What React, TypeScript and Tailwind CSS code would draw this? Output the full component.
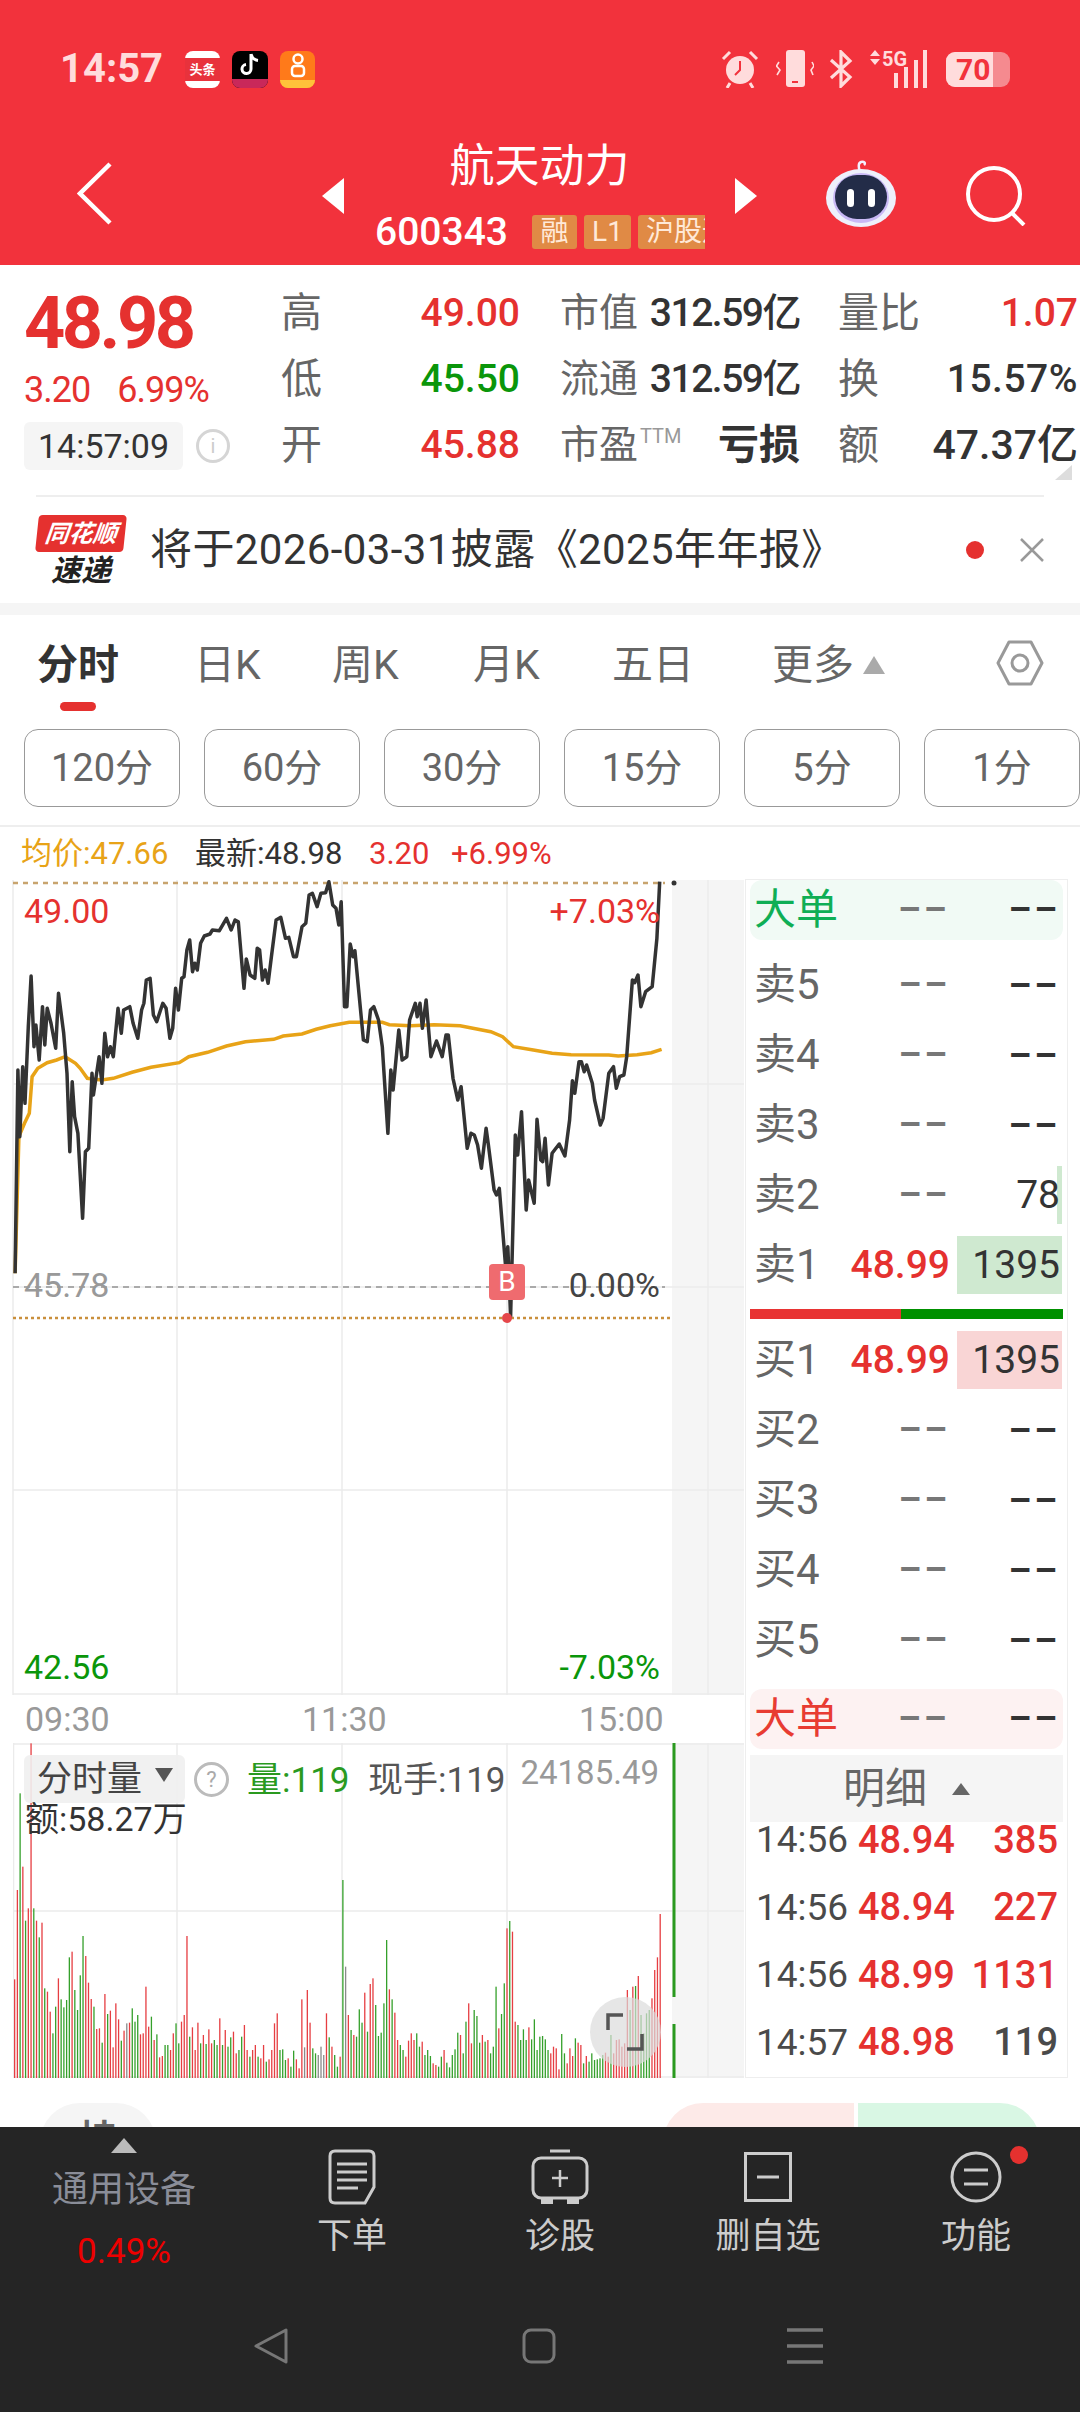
import type { ReactNode } from "react";

// traced from the chart, zoom coordinates: x / 2.119, y / 3
const pricePts = "32,1240 38,630 42,830 48,620 53,730 60,500 66,348 72,560 76,495 83,600 90,440 95,555 100,445 108,490 118,565 124,400 135,520 142,640 148,875 153,665 158,770 165,820 175,1075 181,875 188,865 195,640 198,705 210,590 216,670 222,520 228,590 234,560 240,590 250,445 257,520 262,450 275,440 282,490 292,535 300,450 305,430 310,360 318,355 325,465 332,485 345,430 352,445 360,535 366,505 372,385 378,450 385,355 390,350 396,270 402,240 408,335 413,310 418,330 425,250 433,228 445,222 450,210 465,212 480,175 490,210 498,180 505,185 517,385 522,297 530,345 540,355 545,265 550,270 556,360 562,330 568,370 575,290 585,180 595,172 605,235 612,232 622,290 628,290 640,200 648,190 655,105 662,100 672,140 680,100 690,98 697,65 705,135 712,145 718,195 723,125 730,440 735,440 742,252 748,290 752,272 770,540 778,545 785,450 792,440 802,480 810,560 822,820 828,630 833,690 845,510 852,600 862,590 868,480 880,430 884,470 890,430 895,505 903,420 913,590 925,543 937,590 945,525 950,525 960,655 970,720 977,680 990,865 998,820 1005,825 1012,855 1020,925 1030,805 1035,855 1047,990 1052,1005 1058,985 1072,1230 1076,1160 1082,1370 1092,825 1097,885 1105,755 1115,1050 1120,960 1132,1030 1138,778 1146,900 1150,905 1155,835 1162,975 1170,880 1185,852 1197,888 1207,780 1213,662 1218,700 1227,605 1232,605 1238,635 1243,615 1255,670 1260,720 1272,795 1278,775 1290,640 1300,620 1306,685 1313,650 1322,645 1328,590 1340,360 1345,368 1352,345 1358,440 1368,395 1382,380 1392,235 1398,65";
const avgPts = "32,1240 40,830 52,790 62,760 68,650 80,625 100,608 120,600 138,590 160,610 170,625 185,655 215,660 240,655 280,637 320,622 380,608 400,590 440,577 480,558 520,545 580,538 600,528 640,522 670,508 700,497 740,487 810,487 825,494 870,497 920,494 975,497 1040,515 1065,530 1088,560 1130,570 1170,580 1210,584 1290,585 1310,588 1350,584 1380,578 1402,568";
const volData = "838r 570r 280g 500r 662g 625r 130r 625g 662r 712g 668r 865g 875r 935r 1000g 920g 835r 898g 922g 900g 772g 755r 870g 930g 826g 708g 768r 848r 897r 920g 987r 985r 1028g 882r 942g 932r 1042r 910r 958r 1022g 992r 970x 968r 925g 965g 945g 1003r 1000r 860r 980r 950g 1020r 1003g 1072r 1068r 1035g 1035g 1050r 1000r 970g 1030g 965r 945r 708r 1010g 982r 1050r 968r 1030g 1005r 1032g 988r 1030r 1020g 1035g 955r 1035g 990r 1040g 1012g 995r 1060r 1050g 1010g 975r 1050r 1070g 1050r 1035r 1070g 1075r 1035r 1085g 1078r 1050r 970r 940r 1050g 1048g 1080g 1075r 1100g 1052g 1078r 1105r 898r 1042x 870r 968r 1045g 1060g 1065x 1040x 1065x 940r 1012g 1040r 1065g 1100g 1070r 540g 800x 945r 990g 1005r 1010g 928g 968g 878r 995g 852r 835r 915g 1008g 998g 910g 720g 868r 898g 938r 1020r 1035g 1050g 1070r 1022r 1000r 1020r 1000g 1040g 1025r 1065g 1050g 1068g 1090r 1095r 1100g 1070g 1050r 1088g 1102g 1065g 1048g 998g 1005r 1060g 965g 910r 1030r 930g 948g 1028g 1005r 1025g 1020r 1060g 1040g 860g 985r 942g 850g 685r 663g 695r 965r 975g 1020g 988g 1020g 982r 1018g 958g 1050g 1010g 1008g 1018g 1050g 1060r 1040r 1045r 1108r 1002g 1060g 1090r 1045r 1068r 1015g 1028r 1035r 1090g 1068r 1085g 1060g 1080g 1078g 1075g 1065g 1058r 1070r 1005g 1060r 1020r 1018r 1040r 1030r 870r 930g 860r 858g 828r 945g 1000g 940g 930g 895r 810r 772r 642r"
  .split(" ")
  .map((s) => ({ top: parseInt(s), tone: s.slice(-1) }));

const volColor: Record<string, string> = { r: "#e63e42", g: "#35a02b", x: "#8a8a8a" };

function mapPts(pts: string, sx: number, ox: number, oy: number) {
  return pts
    .split(" ")
    .map((p) => {
      const [x, y] = p.split(",").map(Number);
      return `${(x / sx - ox).toFixed(1)},${(y / 3 - oy).toFixed(1)}`;
    })
    .join(" ");
}

function Dash({ dark }: { dark?: boolean }) {
  return (
    <span className={`text-[36px] leading-none font-bold tracking-[3px] ${dark ? "text-[#333]" : "text-[#777]"}`}>––</span>
  );
}

function BookRow({ label, price, qty, bar, labelTone = "text-[#666]" }: { label: string; price?: string; qty?: string; bar?: ReactNode; labelTone?: string }) {
  return (
    <div className="relative flex h-[70px] items-center">
      <span className={`w-[95px] pl-[4px] text-[42px] leading-none ${labelTone}`}>{label}</span>
      <span className="flex w-[105px] justify-end text-[39px] leading-none font-medium text-[#e5312f]">{price ?? <Dash />}</span>
      <span className="relative flex h-[58px] w-[112px] items-center justify-end pr-[1px] text-[39px] leading-none text-[#333]">
        {bar}
        <span className="relative pr-[1px]">{qty ?? <Dash dark />}</span>
      </span>
    </div>
  );
}

function BigOrder({ tone, bg }: { tone: string; bg: string }) {
  return (
    <div className={`flex h-[60px] items-center rounded-[12px] ${bg}`}>
      <span className={`w-[148px] pl-[4px] text-[42px] leading-none ${tone}`}>大单</span>
      <span className="w-[60px]"><Dash /></span>
      <span className="flex w-[104px] justify-end pr-[2px]"><Dash dark /></span>
    </div>
  );
}

function Detail({ time, price, qty, tone }: { time: string; price: string; qty: string; tone: string }) {
  return (
    <div className="flex h-[67.5px] items-center text-[38px] leading-none">
      <span className="w-[108px] pl-[6px] text-[37px] text-[#4a4a4a]">{time}</span>
      <span className="w-[100px] font-medium text-[#e5312f]">{price}</span>
      <span className={`w-[100px] text-right font-medium ${tone}`}>{qty}</span>
    </div>
  );
}

function Quote({ a, b, c, d, e, f }: { a: string; b: ReactNode; c: ReactNode; d: ReactNode; e: string; f: ReactNode }) {
  return (
    <div className="flex h-[66px] items-center text-[39px] leading-none">
      <div className="flex w-[239px] items-center justify-between">
        <span className="text-[41px] text-[#666]">{a}</span>
        {b}
      </div>
      <div className="ml-[40px] flex w-[240px] items-center justify-between">
        {c}
        {d}
      </div>
      <div className="ml-[38px] flex w-[240px] items-center justify-between">
        <span className="text-[41px] text-[#666]">{e}</span>
        {f}
      </div>
    </div>
  );
}

function Robot() {
  return (
    <svg width="72" height="68" viewBox="0 0 72 68">
      <path d="M35 12 C33 6 33 3 36 2 C39 1 41 3 39 5" fill="none" stroke="#f4f0ff" strokeWidth="2.5" />
      <ellipse cx="36" cy="38" rx="35" ry="29" fill="#eef0fb" />
      <ellipse cx="36" cy="38" rx="28" ry="25" fill="#c9b9f5" />
      <rect x="10" y="15" width="52" height="44" rx="22" fill="#232c48" />
      <rect x="22" y="29" width="7" height="18" rx="3.5" fill="#fff" />
      <rect x="43" y="29" width="7" height="18" rx="3.5" fill="#fff" />
    </svg>
  );
}

function StatusIcons() {
  const c = "#ffdcdc";
  return (
    <div className="ml-auto flex items-center">
      <svg width="38" height="38" viewBox="0 0 38 38" className="mr-[17px]">
        <circle cx="19" cy="20" r="14" fill={c} />
        <path d="M19 11 V20 L14 25" fill="none" stroke="#f2323c" strokeWidth="2" />
        <path d="M2 9 L9 2 M36 9 L29 2 M9 33 L6 38 M29 33 L32 38" stroke={c} strokeWidth="3" />
      </svg>
      <svg width="38" height="38" viewBox="0 0 38 38" className="mr-[15px]">
        <rect x="10" y="0" width="19" height="37" rx="3" fill={c} />
        <rect x="16" y="31" width="6" height="2" fill="#f2323c" />
        <path d="M3 12 L0.5 16 L4 20 L1 25 M36 12 L38 16 L35 20 L37 25" fill="none" stroke={c} strokeWidth="1.6" />
      </svg>
      <svg width="24" height="38" viewBox="0 0 24 38" className="mr-[16px]">
        <path d="M2 10 L21 27 L12 36 V2 L21 11 L2 28" fill="none" stroke={c} strokeWidth="3.2" />
      </svg>
      <div className="relative h-[38px] w-[63px]">
        <span className="absolute left-[13px] top-[-1px] text-[20px] leading-none font-bold text-[#ffdcdc]">5G</span>
        <svg width="63" height="38" viewBox="0 0 63 38" className="absolute inset-0">
          <path d="M1 6 L6 0 L11 6 Z M1 9 H11 L6 15 Z" fill={c} />
          <rect x="25" y="23" width="4" height="15" fill={c} />
          <rect x="35" y="17" width="4" height="21" fill={c} />
          <rect x="45" y="10" width="4" height="28" fill={c} />
          <rect x="54" y="0" width="4" height="38" fill={c} />
        </svg>
      </div>
      <div className="relative ml-[14px] h-[35px] w-[64px] overflow-hidden rounded-[9px] bg-[#f58a8f]">
        <div className="h-full w-[47px] bg-[#ffdcdc]" />
        <span className="absolute left-[10px] top-[3px] text-[30px] leading-none font-bold text-[#f2323c]">70</span>
      </div>
    </div>
  );
}

function NavItem({ icon, label }: { icon: ReactNode; label: string }) {
  return (
    <div className="flex w-[208px] flex-col items-center">
      <div className="flex h-[58px] items-center justify-center">{icon}</div>
      <span className="mt-[13px] text-[35px] leading-none text-[#ccc]">{label}</span>
    </div>
  );
}

function NavWrap() {
  const s = "#ccc";
  return (
    <div className="flex pt-[21px]">
      <NavItem
        label="下单"
        icon={
          <svg width="48" height="56" viewBox="0 0 48 56">
            <path d="M7 2 H41 Q46 2 46 7 V38 L37 54 H7 Q2 54 2 49 V7 Q2 2 7 2 Z" fill="none" stroke={s} strokeWidth="3" />
            <path d="M9 15 H39 M9 23 H39 M9 31 H39 M9 39 H30" stroke={s} strokeWidth="3" />
          </svg>
        }
      />
      <NavItem
        label="诊股"
        icon={
          <svg width="58" height="56" viewBox="0 0 58 56">
            <path d="M19 2 H39" stroke={s} strokeWidth="3" />
            <rect x="2" y="9" width="54" height="40" rx="8" fill="none" stroke={s} strokeWidth="3" />
            <path d="M29 21 V38 M21 29 H37" stroke={s} strokeWidth="2.5" />
            <path d="M10 50 H22 V55 H10 Z M36 50 H48 V55 H36 Z" fill={s} />
          </svg>
        }
      />
      <NavItem
        label="删自选"
        icon={
          <svg width="48" height="50" viewBox="0 0 48 50">
            <rect x="1.5" y="1.5" width="45" height="47" fill="none" stroke={s} strokeWidth="3" />
            <path d="M13 25 H35" stroke={s} strokeWidth="3" />
          </svg>
        }
      />
      <div className="relative">
        <NavItem
          label="功能"
          icon={
            <svg width="52" height="52" viewBox="0 0 52 52">
              <circle cx="26" cy="26" r="24" fill="none" stroke={s} strokeWidth="3" />
              <path d="M14 19 H38 M14 33 H38" stroke={s} strokeWidth="3" />
            </svg>
          }
        />
        <span className="absolute left-[138px] top-[-2px] h-[18px] w-[18px] rounded-full bg-[#e5312f]" />
      </div>
    </div>
  );
}

export default function App() {
  return (
    <div className="flex h-[2412px] w-[1080px] flex-col overflow-hidden bg-white font-[family-name:Roboto,'Noto_Sans_CJK_SC',sans-serif]">
      {/* status bar + stock header */}
      <div className="h-[265px] bg-[#f2323c]">
        <div className="flex h-[138px] items-center pl-[60px] pr-[70px]">
          <span className="w-[125px] text-[40px] leading-none font-bold text-[#ffdcdc]">14:57</span>
          <div className="flex gap-[12px]">
            <div className="flex h-[37px] w-[35px] flex-col items-center justify-center rounded-[8px] bg-white text-[13px] leading-none font-bold text-white">
              <span className="flex h-[23px] w-full items-center justify-center bg-[#e8323c]">头条</span>
            </div>
            <div className="flex h-[37px] w-[36px] flex-col items-center overflow-hidden rounded-[8px] bg-black">
              <svg width="22" height="26" viewBox="0 0 22 26">
                <path d="M12 3 V18 A4.5 4.5 0 1 1 7 13.5 M12 3 C13 7 15 9 19 9.5" fill="none" stroke="#fff" strokeWidth="3" />
              </svg>
              <span className="mt-auto h-[9px] w-full bg-[#c9285a]" />
            </div>
            <div className="flex h-[37px] w-[35px] flex-col items-center overflow-hidden rounded-[8px] bg-[#ff7a1a]">
              <svg width="20" height="28" viewBox="0 0 20 28">
                <circle cx="10" cy="8" r="4.5" fill="none" stroke="#fff" strokeWidth="2.5" />
                <rect x="4" y="15" width="12" height="10" rx="3" fill="none" stroke="#fff" strokeWidth="2.5" />
              </svg>
              <span className="mt-auto h-[8px] w-full bg-[#ffc23a]" />
            </div>
          </div>
          <StatusIcons />
        </div>
        <div className="flex h-[127px] items-start">
          <svg width="35" height="63" viewBox="0 0 35 63" className="ml-[77px] mt-[24px]">
            <path d="M33 2 L3 31.5 L33 61" fill="none" stroke="#fff" strokeWidth="4.5" />
          </svg>
          <svg width="22" height="36" viewBox="0 0 22 36" className="ml-[210px] mt-[40px]">
            <path d="M22 0 V36 L0 18 Z" fill="#fff" />
          </svg>
          <div className="flex w-[391px] flex-col">
            <div className="mt-[6px] text-center text-[45px] leading-[46px] text-white">航天动力</div>
            <div className="mt-[25px] flex h-[34px] w-[361px] items-center overflow-hidden pl-[31px]">
              <span className="w-[157px] shrink-0 text-[39px] leading-none font-medium text-white">600343</span>
              <div className="flex gap-[7px] text-[28px] leading-none text-[#ffe9d8]">
                <span className="flex h-[34px] w-[45px] shrink-0 items-center justify-center rounded-[3px] bg-[#e08a45]">融</span>
                <span className="flex h-[34px] w-[47px] shrink-0 items-center justify-center rounded-[3px] bg-[#e08a45]">L1</span>
                <span className="flex h-[34px] w-[100px] shrink-0 items-center justify-start whitespace-nowrap rounded-[3px] bg-[#e08a45] pl-[8px]">沪股通</span>
              </div>
            </div>
          </div>
          <svg width="22" height="36" viewBox="0 0 22 36" className="mt-[40px]">
            <path d="M0 0 V36 L22 18 Z" fill="#fff" />
          </svg>
          <div className="ml-[68px] mt-[22px]"><Robot /></div>
          <svg width="60" height="60" viewBox="0 0 60 60" className="ml-[69px] mt-[28px]">
            <circle cx="28" cy="28" r="26" fill="none" stroke="#fff" strokeWidth="4" />
            <path d="M46 47 L58 59" stroke="#fff" strokeWidth="4" />
          </svg>
        </div>
      </div>

      {/* quote */}
      <div className="relative flex h-[230px]">
        <div className="w-[281px] pl-[24px]">
          <div className="mt-[25px] text-[72px] leading-[68px] font-bold tracking-[-3.5px] text-[#e5312f]">48.98</div>
          <div className="mt-[14px] flex gap-[27px] text-[36px] leading-[36px] tracking-[-1px] text-[#e5312f]">
            <span>3.20</span>
            <span>6.99%</span>
          </div>
          <div className="mt-[14px] flex items-center">
            <span className="flex h-[48px] w-[159px] items-center justify-center rounded-[6px] bg-[#f5f5f5] text-[34px] leading-none text-[#333]">14:57:09</span>
            <span className="ml-[13px] flex h-[34px] w-[34px] items-center justify-center rounded-full border-[3px] border-[#d5d5d5] text-[20px] leading-none text-[#ccc]">i</span>
          </div>
        </div>
        <div className="pt-[15px]">
          <Quote
            a="高"
            b={<span className="font-medium text-[#e5312f]">49.00</span>}
            c={<span className="text-[#666]">市值</span>}
            d={<span className="font-medium tracking-[-1.5px] text-[#333]">312.59亿</span>}
            e="量比"
            f={<span className="font-medium text-[#e5312f]">1.07</span>}
          />
          <Quote
            a="低"
            b={<span className="font-medium text-[#0a960a]">45.50</span>}
            c={<span className="text-[#666]">流通</span>}
            d={<span className="font-medium tracking-[-1.5px] text-[#333]">312.59亿</span>}
            e="换"
            f={<span className="font-medium tracking-[0.5px] text-[#333]">15.57%</span>}
          />
          <Quote
            a="开"
            b={<span className="font-medium text-[#e5312f]">45.88</span>}
            c={<span className="flex items-start text-[#666]">市盈<span className="ml-[2px] text-[20px] text-[#999]">TTM</span></span>}
            d={<span className="text-[41px] font-bold text-[#333]">亏损</span>}
            e="额"
            f={<span className="text-[41px] font-medium text-[#333]">47.37亿</span>}
          />
        </div>
        <svg width="17" height="15" viewBox="0 0 17 15" className="absolute left-[1055px] top-[200px]">
          <path d="M17 0 V15 H0 Z" fill="#ddd" />
        </svg>
      </div>

      {/* notice banner */}
      <div className="mx-[36px] flex h-[108px] items-center border-t-2 border-[#eee]">
        <div className="relative ml-[1px] flex h-[71px] w-[88px] flex-col items-center">
          <div className="flex h-[38px] w-[88px] -skew-x-6 items-center justify-center rounded-[4px] bg-[#e5312f] text-[24px] leading-none font-bold italic text-white">同花顺</div>
          <div className="mt-[4px] text-[30px] leading-none font-bold italic text-[#222]">速递</div>
        </div>
        <span className="ml-[25px] whitespace-nowrap text-[42px] leading-none tracking-[0.4px] text-[#333]">将于2026-03-31披露《2025年年报》</span>
        <span className="ml-auto mr-[36px] h-[18px] w-[18px] shrink-0 rounded-full bg-[#e5312f]" />
        <svg width="24" height="24" viewBox="0 0 24 24" className="shrink-0">
          <path d="M1 1 L23 23 M23 1 L1 23" stroke="#999" strokeWidth="2.5" />
        </svg>
      </div>
      <div className="h-[12px] bg-[#f5f5f5]" />

      {/* period tabs */}
      <div className="relative flex h-[114px] items-center pb-[14px] text-[41px] leading-none text-[#666]">
        <span className="absolute left-[37px] font-bold text-[#333]">分时</span>
        <span className="absolute left-[60px] top-[87px] h-[9px] w-[36px] rounded-full bg-[#e5312f]" />
        <span className="absolute left-[194px]">日K</span>
        <span className="absolute left-[332px]">周K</span>
        <span className="absolute left-[473px]">月K</span>
        <span className="absolute left-[612px]">五日</span>
        <span className="absolute left-[772px]">更多</span>
        <svg width="22" height="18" viewBox="0 0 22 18" className="absolute left-[863px] top-[41px]">
          <path d="M11 0 L22 18 H0 Z" fill="#aaa" />
        </svg>
        <svg width="48" height="46" viewBox="0 0 48 46" className="absolute left-[996px] top-[25px]">
          <path d="M13 2 H35 L46 23 L35 44 H13 L2 23 Z" fill="none" stroke="#999" strokeWidth="3" strokeLinejoin="round" />
          <circle cx="24" cy="23" r="8" fill="none" stroke="#999" strokeWidth="3" />
        </svg>
      </div>
      <div className="flex gap-[24px] pl-[24px]">
        {["120分", "60分", "30分", "15分", "5分", "1分"].map((t) => (
          <div key={t} className="flex h-[78px] w-[156px] shrink-0 items-center justify-center rounded-[14px] border-[1.5px] border-[#999] text-[38px] leading-none text-[#666]">{t}</div>
        ))}
      </div>
      <div className="mt-[18px] flex h-[54px] items-center border-t-2 border-[#eee] pl-[21px] text-[31px] leading-none whitespace-nowrap">
        <span className="w-[174px] text-[#e8a317]">均价:47.66</span>
        <span className="w-[174px] text-[#333]">最新:48.98</span>
        <span className="w-[82px] text-[#e5312f]">3.20</span>
        <span className="text-[#e5312f]">+6.99%</span>
      </div>

      {/* chart + order book */}
      <div className="flex h-[1199px] items-start">
        <div className="ml-[13px] w-[731px]">
          <div className="relative mt-[1px] h-[815px] w-[731px]">
            <svg width="731" height="815" viewBox="0 0 731 815" className="absolute inset-0 overflow-visible">
              <rect x="659" y="0" width="72" height="815" fill="#f5f5f5" />
              <path d="M695 0 V815 M164 0 V815 M329 0 V815 M494 0 V815 M0 204 H731 M0 407 H731 M0 610 H731 M0 814 H731 M0 0 V815" stroke="#ebebeb" strokeWidth="1.5" fill="none" />
              <path d="M0 3 H652" stroke="#c8a46e" strokeWidth="2.5" strokeDasharray="5 5" />
              <path d="M0 407 H652" stroke="#aaa" strokeWidth="2" strokeDasharray="6 5" />
              <path d="M0 438 H659" stroke="#c98f3c" strokeWidth="2.5" strokeDasharray="3 3" />
              <polyline points={mapPts(avgPts, 2.119, 13, 20)} fill="none" stroke="#e8a317" strokeWidth="3.5" />
              <polyline points={mapPts(pricePts, 2.119, 13, 20)} fill="none" stroke="#333" strokeWidth="3.5" strokeLinejoin="round" />
              <circle cx="494" cy="438" r="5" fill="#e5474a" />
              <circle cx="661" cy="3" r="2.5" fill="#333" />
            </svg>
            <span className="absolute left-[11px] top-[14px] text-[34px] leading-none text-[#e5312f]">49.00</span>
            <span className="absolute right-[84px] top-[14px] text-[34px] leading-none text-[#e5312f]">+7.03%</span>
            <span className="absolute left-[11px] top-[388px] text-[34px] leading-none text-[#999]">45.78</span>
            <span className="absolute right-[84px] top-[388px] text-[34px] leading-none text-[#444]">0.00%</span>
            <span className="absolute left-[11px] top-[770px] text-[34px] leading-none text-[#0a960a]">42.56</span>
            <span className="absolute right-[84px] top-[770px] text-[34px] leading-none text-[#0a960a]">-7.03%</span>
            <span className="absolute left-[476px] top-[384px] flex h-[36px] w-[36px] items-center justify-center rounded-[4px] bg-[#ef6b6f] text-[28px] leading-none text-white">B</span>
          </div>
          <div className="relative h-[48px] text-[34px] leading-none text-[#999]">
            <span className="absolute left-[12px] top-[7px]">09:30</span>
            <span className="absolute left-[289px] top-[7px]">11:30</span>
            <span className="absolute left-[566px] top-[7px]">15:00</span>
          </div>
          <div className="relative h-[335px] w-[731px]">
            <svg width="731" height="335" viewBox="0 0 731 335" className="absolute inset-0">
              <rect x="659" y="0" width="72" height="335" fill="#f5f5f5" />
              <path d="M695 0 V335 M164 0 V335 M329 0 V335 M494 0 V335 M0 168 H731 M0 1 H731 M0 334 H731 M0.5 0 V335" stroke="#ebebeb" strokeWidth="1.5" fill="none" />
              {volData.map((b, i) => {
                const zx = 32 + (i * (1438 - 32)) / (volData.length - 1);
                const y = b.top / 3 - 43;
                return <rect key={i} x={zx / 2.178 - 13.7} y={y} width="1.3" height={335 - y} fill={volColor[b.tone]} />;
              })}
              <path d="M661 0 V254 M661 281 V335" stroke="#2a9a1f" strokeWidth="3" />
            </svg>
            <div className="absolute left-[11px] top-[12px] flex h-[48px] w-[161px] items-center rounded-[6px] bg-[#f0f0f0]/90 pl-[13px] text-[35px] leading-none text-[#444]">
              分时量
              <svg width="18" height="14" viewBox="0 0 18 14" className="ml-[13px] mb-[8px]">
                <path d="M0 0 H18 L9 14 Z" fill="#555" />
              </svg>
            </div>
            <span className="absolute left-[181px] top-[19px] flex h-[35px] w-[35px] items-center justify-center rounded-full border-[3px] border-[#bbb] text-[22px] leading-none text-[#aaa]">?</span>
            <span className="absolute left-[234px] top-[20px] text-[35px] leading-none whitespace-nowrap text-[#2a9a1f]">量:119</span>
            <span className="absolute left-[355px] top-[20px] text-[35px] leading-none whitespace-nowrap text-[#555]">现手:119</span>
            <span className="absolute right-[85px] top-[13px] text-[33px] leading-none text-[#999]">24185.49</span>
            <span className="absolute left-[12px] top-[59px] text-[34px] leading-none whitespace-nowrap text-[#333]">额:58.27万</span>
            <div className="absolute left-[577px] top-[254px] h-[70px] w-[71px] rounded-full bg-[#dcdcdc]/70" />
            <svg width="38" height="38" viewBox="0 0 38 38" className="absolute left-[593px] top-[270px]">
              <path d="M2 17 V2 H17 M36 21 V36 H21" fill="none" stroke="#555" strokeWidth="3.5" />
            </svg>
          </div>
        </div>

        <div className="ml-[1px] h-[1199px] w-[323px] border-[1.5px] border-[#eee] px-[4px]">
          <BigOrder tone="text-[#0fae55]" bg="bg-[#f1faf5]" />
          <div className="mt-[10px]">
            <BookRow label="卖5" />
            <BookRow label="卖4" />
            <BookRow label="卖3" />
            <BookRow label="卖2" qty="78" bar={<span className="absolute right-0 top-0 h-[58px] w-[5px] bg-[#cfe9d0]" />} />
            <BookRow label="卖1" price="48.99" qty="1395" bar={<span className="absolute inset-y-0 right-0 w-[105px] bg-[#cfe9d0]" />} />
          </div>
          <div className="mt-[9px] flex h-[10px]">
            <span className="w-[151px] bg-[#e83333]" />
            <span className="flex-1 bg-[#009000]" />
          </div>
          <div className="mt-[6px]">
            <BookRow label="买1" price="48.99" qty="1395" bar={<span className="absolute inset-y-0 right-0 w-[105px] bg-[#f9d5d5]" />} />
            <BookRow label="买2" />
            <BookRow label="买3" />
            <BookRow label="买4" />
            <BookRow label="买5" />
          </div>
          <div className="mt-[14px]"><BigOrder tone="text-[#e83c32]" bg="bg-[#fdf2f2]" /></div>
          <div className="mt-[6px] flex h-[67px] items-center bg-[#f5f5f5] pl-[93px] text-[42px] leading-none text-[#666]">
            明细
            <svg width="18" height="12" viewBox="0 0 18 12" className="ml-[25px]">
              <path d="M9 0 L18 12 H0 Z" fill="#666" />
            </svg>
          </div>
          <div className="-mt-[16px]">
            <Detail time="14:56" price="48.94" qty="385" tone="text-[#e5312f]" />
            <Detail time="14:56" price="48.94" qty="227" tone="text-[#e5312f]" />
            <Detail time="14:56" price="48.99" qty="1131" tone="text-[#e5312f]" />
            <Detail time="14:57" price="48.98" qty="119" tone="text-[#4a4a4a]" />
          </div>
        </div>
      </div>

      {/* page behind the dock, cut off */}
      <div className="mt-[25px] flex h-[24px] overflow-hidden">
        <div className="ml-[40px] flex h-[60px] w-[116px] justify-center rounded-t-[40px] bg-[#f5f5f5] pt-[17px]">
          <span className="text-[38px] leading-none font-bold text-[#666]">持</span>
        </div>
        <div className="ml-[507px] h-[60px] w-[191px] rounded-tl-[40px] bg-[#fdeae8]" />
        <div className="ml-[4px] h-[60px] w-[182px] rounded-tr-[40px] bg-[#d9f7e4]" />
      </div>

      {/* dock */}
      <div className="flex-1 bg-[#252525]">
        <div className="flex h-[180px]">
          <div className="flex w-[248px] flex-col items-center pt-[11px]">
            <svg width="26" height="15" viewBox="0 0 26 15">
              <path d="M13 0 L26 15 H0 Z" fill="#bbb" />
            </svg>
            <span className="mt-[19px] text-[36px] leading-none text-[#8a8d98]">通用设备</span>
            <span className="mt-[26px] text-[35px] leading-none text-[#ee0000]">0.49%</span>
          </div>
          <NavWrap />
        </div>
        <div className="flex items-center pl-[254px] pt-[21px]">
          <svg width="34" height="36" viewBox="0 0 34 36">
            <path d="M32 2 V34 L2 18 Z" fill="none" stroke="#777" strokeWidth="3" strokeLinejoin="round" />
          </svg>
          <svg width="34" height="36" viewBox="0 0 34 36" className="ml-[234px]">
            <rect x="2" y="2" width="30" height="32" rx="7" fill="none" stroke="#777" strokeWidth="3" />
          </svg>
          <svg width="36" height="36" viewBox="0 0 36 36" className="ml-[231px]">
            <path d="M0 2 H36 M0 18 H36 M0 34 H36" stroke="#777" strokeWidth="3.5" />
          </svg>
        </div>
      </div>
    </div>
  );
}
